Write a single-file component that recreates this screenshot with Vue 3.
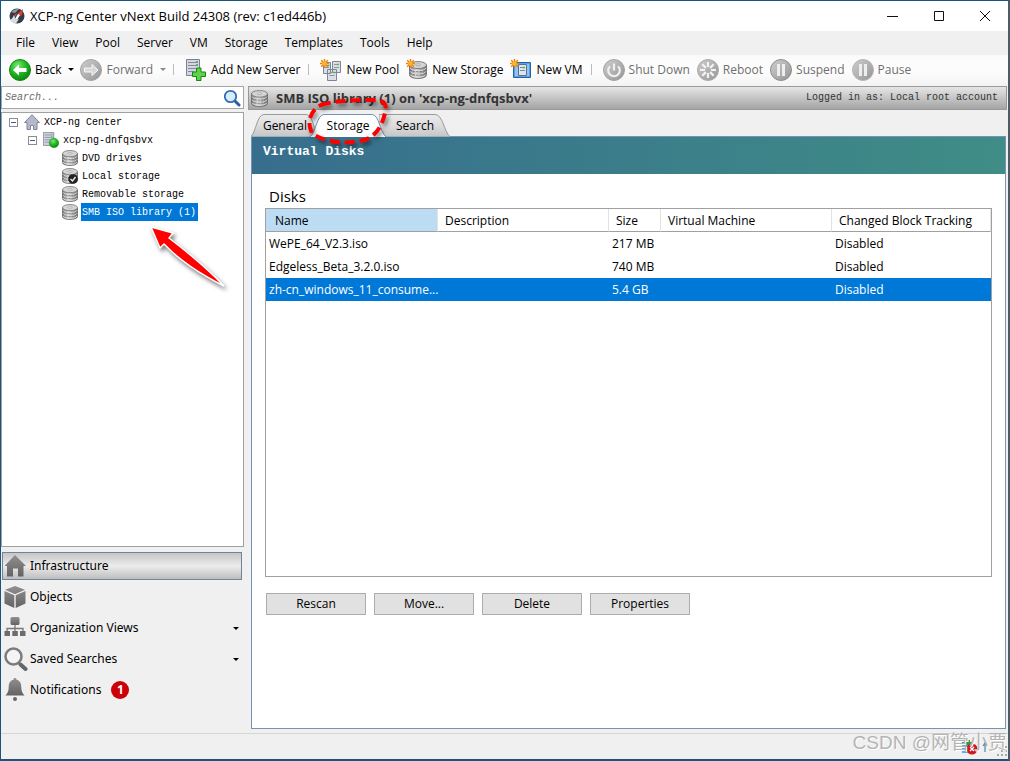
<script setup>
import { ref } from 'vue'

const menus = ['File', 'View', 'Pool', 'Server', 'VM', 'Storage', 'Templates', 'Tools', 'Help']
const query = ref('')
const storageNodes = [
  { name: 'DVD drives', icon: 'disk' },
  { name: 'Local storage', icon: 'disk', checked: true },
  { name: 'Removable storage', icon: 'disk' },
  { name: 'SMB ISO library (1)', icon: 'disk', selected: true },
]
const creators = [
  { label: 'New Pool', icon: 'pool' },
  { label: 'New Storage', icon: 'newdisk' },
  { label: 'New VM', icon: 'vm' },
]
const power = [
  { label: 'Shut Down', icon: 'power' },
  { label: 'Reboot', icon: 'reboot' },
  { label: 'Suspend', icon: 'suspend' },
  { label: 'Pause', icon: 'pause' },
]
const navs = [
  { label: 'Infrastructure', icon: 'house', active: true },
  { label: 'Objects', icon: 'cube' },
  { label: 'Organization Views', icon: 'org', drop: true },
  { label: 'Saved Searches', icon: 'lens', drop: true },
  { label: 'Notifications', icon: 'bell', count: 1 },
]
const disks = [
  { name: 'WePE_64_V2.3.iso', size: '217 MB', cbt: 'Disabled' },
  { name: 'Edgeless_Beta_3.2.0.iso', size: '740 MB', cbt: 'Disabled' },
  { name: 'zh-cn_windows_11_consume...', size: '5.4 GB', cbt: 'Disabled', selected: true },
]
const actions = ['Rescan', 'Move...', 'Delete', 'Properties']
</script>

<template>
  <div class="window">
    <svg class="defs" aria-hidden="true">
      <defs>
        <linearGradient id="gDisk" x1="0" x2="1"><stop offset="0" stop-color="#777" /><stop offset=".4" stop-color="#d6d6d6" /><stop offset="1" stop-color="#707070" /></linearGradient>
        <radialGradient id="gGreen" cx=".4" cy=".3" r=".8"><stop offset="0" stop-color="#7fe87a" /><stop offset=".5" stop-color="#1fb41f" /><stop offset="1" stop-color="#067a0a" /></radialGradient>
        <linearGradient id="gGray" x1="0" y1="0" x2="1" y2="1"><stop offset="0" stop-color="#cfcfcf" /><stop offset="1" stop-color="#949494" /></linearGradient>
        <linearGradient id="gNav" x1="0" y1="0" x2="0" y2="1"><stop offset="0" stop-color="#909090" /><stop offset="1" stop-color="#636363" /></linearGradient>
        <linearGradient id="gTab" x1="0" y1="0" x2="0" y2="1"><stop offset="0" stop-color="#ececec" /><stop offset=".5" stop-color="#dcdcdc" /><stop offset="1" stop-color="#c6c6c6" /></linearGradient>
      </defs>
      <symbol id="disk" viewBox="0 0 16 16">
        <path d="M.5 3.5v9c0 4 15 4 15 0v-9z" fill="url(#gDisk)" stroke="#666" stroke-width=".8" />
        <path d="M1 6.3c1 3.2 13 3.2 14 0M1 9.3c1 3.2 13 3.2 14 0M1 12c1 3.2 13 3.2 14 0" fill="none" stroke="#e6e6e6" stroke-width=".8" />
        <path d="M1 7.3c1 3 13 3 14 0M1 10.3c1 3 13 3 14 0" fill="none" stroke="#6d6d6d" stroke-width=".7" stroke-dasharray="2 1" />
        <ellipse cx="8" cy="3.6" rx="7.5" ry="3.1" fill="#d4d4d4" stroke="#777" stroke-width=".8" />
        <ellipse cx="8" cy="3.4" rx="2" ry=".8" fill="#fff" stroke="#888" stroke-width=".6" />
      </symbol>
      <symbol id="burst" viewBox="0 0 10 10">
        <path d="M5 0v10M0 5h10M1.300 1.300l7.400 7.400M8.700 1.300L1.300 8.700" stroke="#e8820c" stroke-width="1.600" /><circle cx="5" cy="5" r="2.500" fill="#ffb32e" />
      </symbol>
      <symbol id="rack" viewBox="0 0 15 17">
        <path d="M.5.5h13v16H.5z" fill="#d3d6e0" stroke="#7b8094" /><path d="M2 3.500h10M2 6.500h10M2 9.500h10M2 12.500h6" stroke="#84899c" /><path d="M10 2.500h2M10 5.500h2" stroke="#4bc33b" />
      </symbol>
      <symbol id="pool" viewBox="0 0 22 22">
        <path d="M3.500 3.500h7v11h-7zM12.500 2.500h8v11h-8zM7.500 10.500h9v11h-9z" fill="#dcdee6" stroke="#7f8496" />
        <path d="M5 6.500h4M5 8.500h4M14 5.500h5M14 8.500h5M9.500 13.500h5M9.500 16.500h5" stroke="#8d92a4" />
        <path d="M17 5.500h2M13 13.500h2M8 6.500h1.500" stroke="#4bc33b" stroke-width="1.500" /><use href="#burst" width="9" height="9" />
      </symbol>
      <symbol id="newdisk" viewBox="0 0 22 22">
        <use href="#disk" x="3" y="2" width="18" height="18" /><use href="#burst" width="9" height="9" />
      </symbol>
      <symbol id="vm" viewBox="0 0 22 22">
        <path d="M3.500 3.500h17v15h-17z" fill="#56a2e4" stroke="#2462a6" /><path d="M5 5h14v12H5z" fill="#8ec5f2" />
        <path d="M8.500 5.500h8v11h-8z" fill="#dfe4ee" stroke="#5a6f96" /><path d="M10 8.500h5M10 11.500h5" stroke="#7c87a4" /><path d="M13 8.500h2" stroke="#4bc33b" stroke-width="1.500" /><use href="#burst" width="9" height="9" />
      </symbol>
      <symbol id="power" viewBox="0 0 22 22">
        <circle cx="11" cy="11" r="10.500" fill="url(#gGray)" stroke="#a3a3a3" /><path d="M7 7.200a5.800 5.800 0 1 0 8 0M11 4.500v7" fill="none" stroke="#efefef" stroke-width="2.200" />
      </symbol>
      <symbol id="reboot" viewBox="0 0 22 22">
        <circle cx="11" cy="11" r="10.500" fill="url(#gGray)" stroke="#a9a9a9" /><path d="M11 3v5M11 14v5M3 11h5M14 11h5M5.300 5.300l3.600 3.600M13.100 13.100l3.600 3.600M16.700 5.300l-3.600 3.600M8.900 13.100l-3.600 3.600" stroke="#f3f3f3" stroke-width="2.200" />
      </symbol>
      <symbol id="suspend" viewBox="0 0 22 22">
        <circle cx="11" cy="11" r="10.500" fill="url(#gGray)" stroke="#8c8c8c" /><path d="M8.500 5v12M13.500 5v12" stroke="#eee" stroke-width="3" />
      </symbol>
      <symbol id="pause" viewBox="0 0 22 22">
        <circle cx="11" cy="11" r="10.500" fill="url(#gGray)" stroke="#b3b3b3" /><path d="M8.500 5v12M13.500 5v12" stroke="#eee" stroke-width="3" />
      </symbol>
      <symbol id="house" viewBox="0 0 24 24"><path d="M11 1l11 11h-2.500v10.500H14v-8H9v8H3V12H.5z" fill="url(#gNav)" /></symbol>
      <symbol id="cube" viewBox="0 0 24 24"><path d="M11 1l10 3.800-10 4.500L1 4.800zM.5 6L10.300 10.300V23L.5 18.500zM21.500 6l-9.800 4.300V23l9.800-4.500z" fill="url(#gNav)" /></symbol>
      <symbol id="org" viewBox="0 0 24 24"><rect x="6.500" y="1" width="9" height="8" rx="1.500" fill="url(#gNav)" /><path d="M11 9v7M3 15.500v-3h16v3" fill="none" stroke="#777" stroke-width="1.300" /><path d="M.5 15h5.500v5H.5zM8.300 15h5.500v5H8.300zM16 15h5.500v5H16z" fill="#6c6c6c" /></symbol>
      <symbol id="lens" viewBox="0 0 24 24"><circle cx="9.500" cy="9.500" r="8" fill="#f4f4f4" stroke="#7b7b7b" stroke-width="2.500" /><path d="M16.500 17.500l5 4.500" stroke="#666" stroke-width="4" stroke-linecap="round" /></symbol>
      <symbol id="bell" viewBox="0 0 24 24"><path d="M11 0c1.200 0 1.500 1 1.500 1.800C16 2.500 17.300 5.500 17.300 9c0 4 1 6 3.200 8.500h-19C3.700 15 4.700 13 4.700 9c0-3.500 1.300-6.500 4.800-7.200C9.500 1 9.800 0 11 0z" fill="url(#gNav)" /><circle cx="11" cy="21" r="2" fill="#666" /></symbol>
    </svg>

    <header class="titlebar">
      <svg class="logo" viewBox="0 0 16 16"><circle cx="8" cy="8" r="7.500" fill="#323c46" /><path d="M1 12c2-1 3-3 4-5l2 5 3-1-3 4.400C4 15 2 14 1 12z" fill="#d5dde2" /><path d="M2 4c2-2 5-3.500 8-3L6 5z" fill="#8d9aa4" /><path d="M9 5l5-4-1 6-4 2zM5 7l3-2-1 4z" fill="#d6402f" /><path d="M6 11l3-5 2 1-3 5z" fill="#fff" /></svg>
      <h1>XCP-ng Center vNext Build 24308 (rev: c1ed446b)</h1>
      <div class="winbtns">
        <button aria-label="Minimize"><svg viewBox="0 0 12 12"><path d="M0 6.500h11" /></svg></button>
        <button aria-label="Maximize"><svg viewBox="0 0 12 12"><path d="M1.500 1.500h9v9h-9z" /></svg></button>
        <button aria-label="Close"><svg viewBox="0 0 12 12"><path d="M1 1l10 10M11 1L1 11" /></svg></button>
      </div>
    </header>

    <nav class="menubar"><button v-for="m in menus" :key="m">{{ m }}</button></nav>

    <div class="toolbar">
      <button class="tool"><svg viewBox="0 0 22 22"><circle cx="11" cy="11" r="10.500" fill="url(#gGreen)" stroke="#0d8a12" /><path d="M4 11l6-5.500V9h7.500v4H10v3.500z" fill="#fff" /></svg>Back</button>
      <i class="caret"></i>
      <button class="tool off"><svg viewBox="0 0 22 22"><circle cx="11" cy="11" r="10.500" fill="url(#gGray)" stroke="#a3a3a3" /><path d="M18 11l-6-5.500V9H4.500v4H12v3.500z" fill="#d8d8d8" stroke="#f8f8f8" /></svg>Forward</button>
      <i class="caret dim"></i>
      <i class="sep"></i>
      <button class="tool"><svg viewBox="0 0 22 22"><use href="#rack" x="1" y="0" width="15" height="17" /><path d="M11.500 9h4.500v4h4.500v4.500H16v4h-4.500v-4H7.500V13h4z" fill="#5fd14c" stroke="#158a13" /></svg>Add New Server</button>
      <i class="sep"></i>
      <button v-for="c in creators" :key="c.label" class="tool"><svg><use :href="'#' + c.icon" /></svg>{{ c.label }}</button>
      <i class="sep"></i>
      <button v-for="p in power" :key="p.label" class="tool off"><svg><use :href="'#' + p.icon" /></svg>{{ p.label }}</button>
    </div>

    <main class="body">
      <aside class="side">
        <div class="search">
          <input v-model="query" aria-label="Search" placeholder="Search..." />
          <svg viewBox="0 0 18 18"><path d="M11.500 11.500l4.500 4.500" stroke="#2b5f9f" stroke-width="3" stroke-linecap="round" /><circle cx="7.500" cy="7.500" r="5.700" fill="#d6ecfb" stroke="#2f6db5" stroke-width="1.800" /></svg>
        </div>
        <div class="tree">
          <div class="node">
            <button class="fold" aria-label="Collapse"></button>
            <svg viewBox="0 0 16 16"><path d="M8 .7l7.500 7.800H13v7h-3.500v-4h-3v4H3v-7H.5z" fill="#b4b8c8" stroke="#80859a" /></svg>
            <span>XCP-ng Center</span>
          </div>
          <div class="node level1">
            <button class="fold" aria-label="Collapse"></button>
            <svg viewBox="0 0 16 16"><use href="#rack" width="12" height="14" /><circle cx="11" cy="11" r="4.700" fill="url(#gGreen)" stroke="#169719" stroke-width=".6" /></svg>
            <span>xcp-ng-dnfqsbvx</span>
          </div>
          <div v-for="n in storageNodes" :key="n.name" class="node level2">
            <svg viewBox="0 0 16 16"><use :href="'#' + n.icon" /><g v-if="n.checked"><circle cx="11" cy="11" r="4.800" fill="#222" /><path d="M8.500 11l2 2 3-4" fill="none" stroke="#eee" stroke-width="1.400" /></g></svg>
            <span :class="{ selected: n.selected }">{{ n.name }}</span>
          </div>
          <svg class="arrow" viewBox="0 0 90 80"><path d="M9 11L31 17 27 22C48 38 66 53 82 70 62 60 40 47 22 28L18 32z" fill="#f00" stroke="#fff" stroke-width="1.500" /></svg>
        </div>
        <nav class="views">
          <button v-for="v in navs" :key="v.label" :class="{ active: v.active }">
            <svg><use :href="'#' + v.icon" /></svg><span>{{ v.label }}</span>
            <b v-if="v.count">{{ v.count }}</b><i v-if="v.drop" class="caret"></i>
          </button>
        </nav>
      </aside>

      <section class="content">
        <div class="heading">
          <svg class="headicon" viewBox="0 0 16 16"><use href="#disk" /></svg>
          <h2>SMB ISO library (1) on 'xcp-ng-dnfqsbvx'</h2>
          <span>Logged in as: Local root account</span>
        </div>
        <div class="tabs">
          <button class="general"><svg viewBox="0 0 68 23"><path d="M0 22.500C5 18 6 .5 13 .5h42c7 0 8 17.500 13 22" fill="url(#gTab)" stroke="#9a9a9a" /></svg><span>General</span></button>
          <button class="storage"><svg viewBox="0 0 76 23"><path d="M0 23C6 18 7 .5 14 .5h48c7 0 8 17.500 14 22.500" fill="#fff" stroke="#6f93ba" /></svg><span>Storage</span></button>
          <button class="find"><svg viewBox="0 0 72 23"><path d="M0 22.500V.5h56c8 0 9 17.500 15 22" fill="url(#gTab)" stroke="#9a9a9a" /></svg><span>Search</span></button>
          <svg class="ring" viewBox="0 0 86 54"><path d="M14 7C30 2 50 2 68 2c10 0 12 5 10 13C74 32 66 43 46 44 28 46 12 41 5 35-1 24 4 12 14 7z" /></svg>
        </div>
        <div class="panel">
          <h3>Virtual Disks</h3>
          <div class="inner">
            <h4>Disks</h4>
            <div class="grid">
              <table>
                <colgroup><col class="first" /><col class="wide" /><col class="narrow" /><col class="wide" /><col /></colgroup>
                <thead><tr><th class="sorted">Name</th><th>Description</th><th>Size</th><th>Virtual Machine</th><th>Changed Block Tracking</th></tr></thead>
                <tbody>
                  <tr v-for="d in disks" :key="d.name" :class="{ selected: d.selected }"><td>{{ d.name }}</td><td></td><td>{{ d.size }}</td><td></td><td>{{ d.cbt }}</td></tr>
                </tbody>
              </table>
            </div>
            <div class="actions"><button v-for="a in actions" :key="a">{{ a }}</button></div>
          </div>
        </div>
      </section>
    </main>

    <footer class="status">
      <svg class="state" viewBox="0 0 28 16"><path d="M1 3h11v11H1z" fill="#5aaee8" /><path d="M1 1h3v2h2V1h3v2h4v3H1z" fill="#2f9b46" /><path d="M3 8h2M3 11h2M7 8h2" stroke="#fff" stroke-width="1.500" /><circle cx="11" cy="10" r="5.500" fill="#cf1820" /><path d="M9 8l4 4M13 8l-4 4" stroke="#fff" stroke-width="1.300" /><path d="M24 13V5M22 7l2-3 2 3" fill="none" stroke="#5b8db8" stroke-width="1.300" /></svg>
      <svg class="grip" viewBox="0 0 11 11"><path d="M9 1h2M5 5h2M9 5h2M1 9h2M5 9h2M9 9h2" stroke="#aaa" stroke-width="2" /></svg>
      <span class="mark">CSDN @网管小贾</span>
    </footer>
  </div>
</template>

<style>
html, body { margin: 0; background: #efefef; }
</style>

<style scoped>
* { box-sizing: border-box; }
h1, h2, h3, h4 { margin: 0; font-weight: 400; }
button { font: inherit; color: inherit; border: 0; background: none; padding: 0; margin: 0; white-space: nowrap; }
.window { min-height: 100vh; display: flex; flex-direction: column; border: 1px solid #19567c; border-bottom-width: 2px; border-right: 2px solid #4c5b66; background: #f0f0f0; color: #000; font: 12px/18px "Open Sans", "Noto Sans", sans-serif; }
.defs { position: absolute; width: 0; height: 0; }
.titlebar { height: 30px; background: #fff; display: flex; align-items: center; padding-left: 8px; }
.logo { width: 16px; height: 16px; margin-right: 5px; }
.titlebar h1 { flex: 1; font-size: 13px; }
.winbtns { display: flex; }
.winbtns button { width: 46px; height: 28px; display: grid; place-items: center; }
.winbtns svg { width: 12px; height: 12px; fill: none; stroke: #111; }
.menubar { height: 24px; display: flex; align-items: center; gap: 17px; padding-left: 15px; background: #f0f0f0; }
.toolbar { height: 31px; display: flex; align-items: center; padding: 0 0 2px 8px; background: linear-gradient(#fafafa, #fdfdfd 50%, #f3f3f3); }
.tool { display: flex; align-items: center; gap: 4px; margin-right: 7px; }
.tool svg { width: 22px; height: 22px; flex: none; }
.off { color: #6f6f6f; }
.caret { border: 3px solid transparent; border-top-color: #000; border-bottom: 0; width: 6px; height: 3px; }
.toolbar .caret { margin-right: 6px; }
.toolbar .caret.dim { border-top-color: #888; }
.sep { width: 1px; height: 11px; background: #bcbcbc; margin: 0 11px 0 1px; }
.body { flex: 1; display: flex; gap: 4px; }
.side { width: 243px; display: flex; flex-direction: column; }
.search { height: 23px; border: 1px solid #a5a5a5; background: #fff; display: flex; align-items: center; padding: 0 2px 0 3px; margin-bottom: 3px; }
.search input { flex: 1; min-width: 0; border: 0; outline: 0; padding: 0; background: none; font: italic 10px/18px "Liberation Mono", monospace; }
.search input::placeholder { color: #6d6d6d; opacity: 1; }
.search svg { width: 18px; height: 18px; }
.tree { position: relative; flex: 1; background: #fff; border: 1px solid #a0a0a0; font: 10px/16px "Liberation Mono", monospace; }
.node { display: flex; align-items: center; height: 18px; padding-left: 7px; }
.level1 { padding-left: 26px; }
.level2 { padding-left: 60px; }
.node svg { width: 16px; height: 16px; margin-right: 3px; }
.node span { padding: 2px 2px 0 1px; line-height: 16px; }
.node .selected { background: #0078d7; color: #fff; }
.fold { width: 9px; height: 9px; margin-right: 6px; border: 1px solid #8c8c8c; background: linear-gradient(#3c58a8, #3c58a8) center / 5px 1px no-repeat #fff; }
.arrow { position: absolute; left: 140px; top: 103px; width: 90px; height: 80px; filter: drop-shadow(2px 3px 2px rgba(0, 0, 0, .5)); }
.views { display: flex; flex-direction: column; gap: 3px; padding: 5px 2px 29px 1px; }
.views button { height: 28px; display: flex; align-items: center; font-family: "Noto Sans", sans-serif; padding: 0 2px 0 1px; border: 1px solid transparent; text-align: left; }
.views .active { border-color: #73839c; background: linear-gradient(#c6c6c6, #ececec 50%, #bdbdbd); }
.views svg { width: 24px; height: 24px; margin-right: 2px; }
.views b { width: 18px; height: 18px; margin-left: 10px; border-radius: 9px; background: #cd0008; color: #fff; text-align: center; }
.views .caret { margin-left: auto; }
.content { flex: 1; min-width: 0; display: flex; flex-direction: column; padding-bottom: 4px; }
.heading { height: 24px; display: flex; align-items: center; border: 1px solid #999; background: linear-gradient(#e6e6e6, #a4a4a4); padding: 0 8px 0 2px; margin-right: 1px; color: #333; }
.headicon { width: 17px; height: 17px; margin-right: 8px; }
.heading h2 { flex: 1; font-size: 13px; font-weight: 700; }
.heading span { font: 10px/18px "Liberation Mono", monospace; }
.tabs { position: relative; display: flex; padding: 4px 0 0 3px; }
.tabs button { position: relative; height: 23px; }
.tabs button svg { position: absolute; left: 0; top: 0; width: 100%; height: 23px; }
.tabs button span { position: relative; }
.general { width: 68px; }
.tabs .storage { width: 76px; margin-left: -9px; z-index: 1; }
.find { width: 72px; margin-left: -7px; }
.ring { position: absolute; left: 59px; top: -12px; width: 86px; height: 54px; z-index: 2; fill: none; stroke: #f00; stroke-width: 4; stroke-dasharray: 10 5; filter: drop-shadow(2px 3px 2px rgba(0, 0, 0, .5)); }
.panel { flex: 1; display: flex; flex-direction: column; margin: -1px 2px 0 3px; border: 1px solid #7593b8; background: #fff; }
.panel h3 { height: 37px; padding: 6px 11px; background: linear-gradient(90deg, #376e8e, #3f8d86); color: #fff; font: bold 13px/18px "Liberation Mono", monospace; }
.inner { flex: 1; display: flex; flex-direction: column; padding: 12px 13px 113px; }
.inner h4 { font-size: 15px; line-height: 20px; padding-left: 4px; margin-bottom: 2px; }
.grid { flex: 1; border: 1px solid #a0a0a0; }
table { width: 100%; table-layout: fixed; border-collapse: separate; border-spacing: 0; }
.first { width: 172px; }
.wide { width: 171px; }
.narrow { width: 52px; }
th, td { height: 23px; padding: 0 0 0 3px; text-align: left; font-weight: 400; white-space: nowrap; }
th { padding: 2px 0 0 7px; border-bottom: 1px solid #a0a0a0; border-right: 1px solid #e2e2e2; }
.sorted { padding-left: 9px; background: #bcdcf4; }
tr.selected { background: #0078d7; color: #fff; }
.actions { display: flex; gap: 8px; padding: 16px 1px 0; }
.actions button { width: 100px; height: 22px; border: 1px solid #adadad; background: #e1e1e1; }
.status { position: relative; height: 26px; border-top: 1px solid #d5d5d5; display: flex; justify-content: flex-end; align-items: center; padding-right: 1px; }
.state { width: 28px; height: 16px; margin-right: 7px; }
.grip { width: 11px; height: 11px; margin-top: 10px; }
.mark { position: absolute; right: 1px; top: -5px; font: 19px/28px "Liberation Sans", "Noto Sans CJK SC", sans-serif; color: #b4b4b4; text-shadow: 1px 1px #fff; }
</style>
